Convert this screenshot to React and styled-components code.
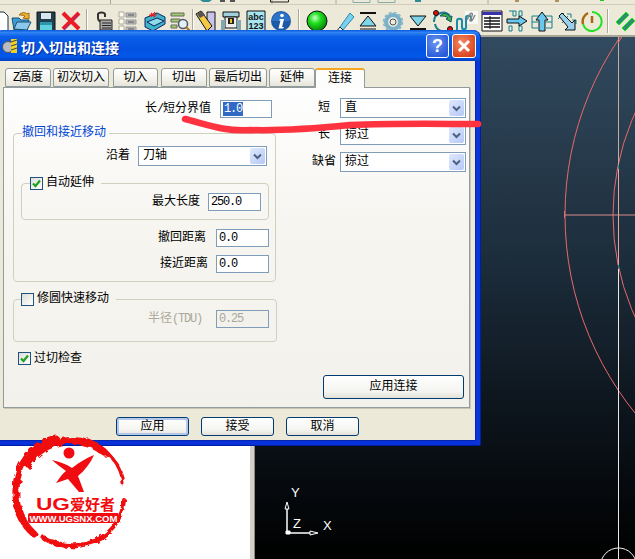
import React from "react";
import styled, { createGlobalStyle } from "styled-components";

const Global = createGlobalStyle`
  html, body { margin: 0; padding: 0; background: #fff; overflow: hidden; }
  * { box-sizing: border-box; }
  body { font-family: "Liberation Mono", "Noto Sans CJK SC", monospace; font-size: 12px; color: #000; }
`;

const Screen = styled.div`
  position: relative;
  width: 635px;
  height: 559px;
  overflow: hidden;
  display: flex;
  flex-direction: column;
`;

/* ---------- main toolbar ---------- */
const TopBar = styled.div`
  height: 37px;
  flex: none;
  background: #ece9d8;
  border-bottom: 2px solid #a9a594;
`;
const ClippedRow = styled.svg`
  display: block;
  width: 635px;
  height: 6px;
`;
const ToolRow = styled.div`
  display: flex;
  height: 29px;
  padding-top: 4px;
  margin-left: -12px;
`;
const Tool = styled.div`
  flex: none;
  width: ${(p) => p.$w}px;
  display: flex;
  justify-content: center;
  align-items: flex-start;
`;
const ToolSep = styled.div`
  flex: none;
  width: ${(p) => p.$w}px;
  display: flex;
  justify-content: center;
  &::after {
    content: "";
    width: 2px;
    height: 24px;
    margin-top: -1px;
    background: linear-gradient(90deg, #aca899 50%, #fff 50%);
  }
`;

const Ico = ({ children, size = 22 }) => (
  <svg width={size} height={size} viewBox="0 0 22 22" fill="none">
    {children}
  </svg>
);

const tools = [
  [23, <Ico><path d="M6 2h9l4 4v15H6z" fill="#fff" stroke="#17304a" /></Ico>],
  [22, <Ico><path d="M1 8h7l2 2h8l-2 10H3z" fill="#3f9ad8" stroke="#17506f" /><path d="M3 19l3-7h14l-4 8z" fill="#8cc8ee" stroke="#17506f" /><path d="M8 5c3-3 6-3 8-1l2-1v6l-6-1 2-2c-2-1-4-1-6-1z" fill="#f0b030" stroke="#a06a10" /></Ico>],
  [25, <Ico><path d="M2 2h18v19H2z" fill="#21404f" stroke="#111" /><path d="M6 3h10v6H6z" fill="#d8e6ee" /><path d="M5 12h12v9H5z" fill="#5fd0e0" /><path d="M5 12h12v3H5z" fill="#2e96ac" /></Ico>],
  [25, <Ico><path d="M3 3l16 16M19 3L3 19" stroke="#ea1c24" strokeWidth="4" /><path d="M10 14l-6 6M18 5l-5 5" stroke="#7a2fae" strokeWidth="1" /></Ico>],
  [8, null],
  [25, <Ico><path d="M12 7V4c-1-2-6-2-7 0v4c0 3 3 4 6 4" stroke="#333" strokeWidth="2" /><path d="M7 10h12v10H7z" fill="#aaa" stroke="#222" /><path d="M9 13h9M9 15.500h9M9 18h9" stroke="#222" /></Ico>],
  [26, <Ico><path d="M1 2h5v5H1zM1 9h5v5H1zM1 16h5v5H1z" fill="#fffbe0" stroke="#aaa" /><path d="M8 3h10v4H8zM8 10h10v4H8zM8 17h10v4H8z" fill="#bbb" stroke="#999" /><path d="M10 5h6M10 12h6M10 19h6" stroke="#555" /></Ico>],
  [26, <Ico><path d="M1 8l12-5 8 4v7L9 21l-8-4z" fill="#3fb4c8" stroke="#126" /><path d="M3 12l10-4 7 3-10 5z" fill="#8edce8" stroke="#126" /><path d="M7 3l4 4M11 2L7 7M5 5h8" stroke="#f01818" strokeWidth="1.200" /></Ico>],
  [23, <Ico><path d="M2 3h13v3H2zM2 9h9v3H2zM2 15h6v3H2z" fill="#9fce6a" stroke="#666" /><circle cx="14" cy="14" r="4.500" fill="#dff2f8" stroke="#556" strokeWidth="1.500" /><path d="M17 17l4 4" stroke="#a8752a" strokeWidth="2" /></Ico>],
  [3, null],
  [24, <Ico><path d="M12 2h8v20h-8z" fill="#c8c4e8" stroke="#111" /><path d="M1 4l5-3 11 15-5 5z" fill="#f2c845" stroke="#111" /><path d="M2 4l5-3 3 4-5 3z" fill="#555" /></Ico>],
  [25, <Ico><path d="M3 2h16v5H3z" fill="#9fd2dc" stroke="#111" /><path d="M5 7h12v11H5z" fill="#eee" stroke="#111" /><path d="M8 8h6v6H8z" fill="#222" /><path d="M10 9h2v4h-2z" fill="#f0c020" /><path d="M1 10h4v10H1zM17 10h4v10h-4z" fill="#7fa8b0" /></Ico>],
  [25, <Ico><path d="M2 1h18v20H2z" fill="#a8e4f2" stroke="#111" /><text x="11" y="10" fontSize="9" fontWeight="700" fill="#111" textAnchor="middle" fontFamily="Liberation Sans">abc</text><text x="11" y="19" fontSize="9" fontWeight="700" fill="#111" textAnchor="middle" fontFamily="Liberation Sans">123</text></Ico>],
  [26, <Ico><circle cx="11" cy="11" r="10" fill="#1c5aa8" /><path d="M2 11a9 9 0 0 1 18 0z" fill="#2c73c8" /><circle cx="12" cy="5.500" r="1.800" fill="#fff" /><path d="M10 9h4l-2 8h2l-1 1.500H8.500l2-8H9z" fill="#fff" /></Ico>],
  [10, null],
  [26, <Ico><defs><radialGradient id="ball" cx="0.4" cy="0.35" r="0.7"><stop offset="0" stopColor="#c8ffc8" /><stop offset="0.4" stopColor="#1ee01e" /><stop offset="1" stopColor="#057a05" /></radialGradient></defs><circle cx="11" cy="11" r="10" fill="url(#ball)" stroke="#111" /></Ico>],
  [25, <Ico><path d="M8 17L18 3l4 4-11 13z" fill="#7cd0f0" stroke="#2b89b0" /><path d="M8 17l3 3-7 2z" fill="#fff" stroke="#222" /></Ico>],
  [25, <Ico><path d="M3 3h16" stroke="#111" strokeWidth="2" /><path d="M11 6l8 10H3z" fill="#7ed4e8" stroke="#111" /><path d="M3 19h16" stroke="#111" strokeWidth="1" /></Ico>],
  [25, <Ico><circle cx="11" cy="12" r="7" stroke="#7ab0c8" strokeWidth="4" /><circle cx="11" cy="12" r="9.500" stroke="#8ab8c8" strokeWidth="1.500" strokeDasharray="3 2" /><circle cx="11" cy="12" r="3" fill="#ece9d8" stroke="#456" /></Ico>],
  [25, <Ico><path d="M3 6l8 10 8-10z" fill="#7ed4e8" stroke="#111" /><path d="M3 19h16" stroke="#111" strokeWidth="2" /></Ico>],
  [25, <Ico><path d="M2 12a9 9 0 0 1 16-6" stroke="#207c8c" strokeWidth="2" /><path d="M3 14a9 9 0 0 0 15 5" stroke="#207c8c" strokeWidth="2" /><path d="M8 6c3-4 8-3 10 1l2-1-1 6-5-3 2-1c-2-2-5-2-8-2z" fill="#3cb44a" stroke="#156" /><circle cx="4" cy="3" r="2.500" fill="#e01010" stroke="#111" /><circle cx="18" cy="19" r="2.500" fill="#e01010" stroke="#111" /></Ico>],
  [24, <Ico><path d="M9 1h13v13H9z" fill="#f8f8f6" /><path d="M1 21V11c0-3 5-3 5 0v6c0 3 4 3 4 0V8c0-3 5-3 5 0v3" stroke="#1a8ca8" strokeWidth="2" /><path d="M11 10l3-6c2-2 3 0 2 2l-2 4c0 2 2 1 3-1l2-4" stroke="#888" strokeWidth="1.500" /></Ico>],
  [25, <Ico><path d="M1 1h20v20H1z" fill="#fff" stroke="#111" /><path d="M1 2h20v3H1z" fill="#3a32a8" /><path d="M3 8h16M3 11h16M3 14h16M3 17h16" stroke="#111" strokeWidth="1.500" /><path d="M9 6v13" stroke="#111" /></Ico>],
  [25, <Ico><path d="M7 1h3v5H7zM13 1h3v5h-3zM3 1h4M3 16h3v5H3zM13 16h3v5h-3z" stroke="#12808c" /><path d="M1 9h12V6l8 5-8 5v-3H1z" fill="#68c8f0" stroke="#111" /></Ico>],
  [25, <Ico><path d="M1 6h7M14 6h7M1 12h6M15 12h6M1 18h6M15 18h6M1 6v12M21 6v12" stroke="#12808c" /><path d="M8 21V10H5l6-8 6 8h-3v11z" fill="#68c8f0" stroke="#111" /></Ico>],
  [25, <Ico><path d="M2 9l6-6M6 13l6-7M11 4l4 0v4" stroke="#12808c" /><path d="M16 10l4 0v4" stroke="#12808c" /><path d="M3 6l3-3 10 10 3-3v10H9l3-3z" fill="#9ad0ec" stroke="#111" /></Ico>],
  [25, <Ico><path d="M11 2a9.500 9.500 0 1 1-9 12" stroke="#22e022" strokeWidth="2" /><path d="M2 14A9.500 9.500 0 0 1 7 3" stroke="#a86a10" strokeWidth="2.500" /><path d="M11 6v7" stroke="#a86a10" strokeWidth="2.500" /></Ico>],
  [8, null],
  [25, <Ico><path d="M2 12L12 2l3 3L5 15zM8 18L18 8l3 3-10 10z" fill="#2d8f70" stroke="#18e818" /></Ico>],
];

/* ---------- work area below the toolbar ---------- */
const Work = styled.div`
  flex: 1;
  display: flex;
  min-height: 0;
`;
const SidePane = styled.div`
  width: 250px;
  flex: none;
  background: #fff;
`;
const Splitter = styled.div`
  width: 5px;
  flex: none;
  background: #d4d0c8;
  border-right: 1px solid #8c8a80;
`;
const Viewport = styled.div`
  flex: 1;
  background: linear-gradient(180deg, #324a5f 0%, #1b2b39 45%, #0b1219 75%, #000 100%);
`;
const ViewSvg = styled.svg`
  display: block;
  width: 380px;
  height: 522px;
`;

/* ---------- dialog ---------- */
const Dialog = styled.div`
  position: absolute;
  left: -4px;
  top: 30px;
  width: 484px;
  height: 415px;
  display: flex;
  flex-direction: column;
  background: #ece9d8;
  border: 4px solid #0831d9;
  border-top: 0;
  border-right-color: #0a35d8;
  border-radius: 8px 8px 0 0;
  box-shadow: inset -1px -1px 0 #0626b0, 1px 0 0 #001ea0, 0 1px 0 #001ea0;
`;
const TitleBar = styled.div`
  height: 31px;
  flex: none;
  margin: 0 -4px;
  padding: 4px 4px 0 6px;
  display: flex;
  align-items: flex-start;
  border-radius: 8px 8px 0 0;
  background: linear-gradient(180deg, #0a58e0 0%, #2f83f2 8%, #0a5ee8 22%, #0352e2 60%, #0358ea 85%, #0340c4 100%);
`;
const TitleIcon = styled.svg`
  margin: 4px 3px 0 0;
  flex: none;
`;
const TitleText = styled.div`
  flex: 1;
  margin-top: 4px;
  font-family: "Noto Sans CJK SC", sans-serif;
  font-size: 14px;
  font-weight: 700;
  line-height: 18px;
  color: #fff;
  text-shadow: 1px 1px 0 #0a2a90;
`;
const CapButton = styled.div`
  width: ${(p) => (p.$close ? 24 : 23)}px;
  height: 24px;
  flex: none;
  margin-left: ${(p) => p.$ml || 0}px;
  border: 1px solid #fff;
  border-radius: 3px;
  display: flex;
  align-items: center;
  justify-content: center;
  color: #fff;
  font-family: "Liberation Sans", sans-serif;
  font-weight: 700;
  font-size: 18px;
  background: ${(p) =>
    p.$close
      ? "radial-gradient(circle at 40% 35%, #f08a68, #dd4a22 70%, #c43a18)"
      : "radial-gradient(circle at 40% 35%, #6a95f0, #2f60dc 70%, #2350c8)"};
`;

const Tabs = styled.div`
  display: flex;
  flex: none;
  height: 20px;
  margin-top: 6px;
  padding-left: 5px;
  align-items: flex-end;
  position: relative;
  z-index: 1;
`;
const Tab = styled.div`
  width: ${(p) => p.$w}px;
  height: ${(p) => (p.$active ? 20 : 19)}px;
  margin-left: ${(p) => p.$ml ?? 2}px;
  margin-bottom: ${(p) => (p.$active ? -1 : 0)}px;
  display: flex;
  align-items: center;
  justify-content: center;
  line-height: 16px;
  border: 1px solid #919b9c;
  border-bottom: ${(p) => (p.$active ? 0 : "1px solid #919b9c")};
  border-radius: 3px 3px 0 0;
  background: ${(p) => (p.$active ? "#fdfdfc" : "linear-gradient(180deg, #fff, #f3f2ec 60%, #e6e4da)")};
  border-top: ${(p) => (p.$active ? "2px solid #f5a623" : "1px solid #919b9c")};
`;
const Panel = styled.div`
  height: 321px;
  flex: none;
  margin-left: 3px;
  width: 467px;
  padding: 12px 3px 8px 9px;
  display: grid;
  grid-template-columns: 264px 156px;
  column-gap: 33px;
  border: 1px solid #919b9c;
  box-shadow: 1px 1px 0 #c9c6b6;
  background: linear-gradient(180deg, #fefefe 0%, #f6f5f0 45%, #f2f1eb 100%);
`;
const LeftCol = styled.div`
  display: flex;
  flex-direction: column;
`;
const RightCol = styled.div`
  display: flex;
  flex-direction: column;
  gap: 7px;
  margin-top: -2px;
`;
const Row = styled.div`
  display: flex;
  justify-content: flex-end;
  align-items: center;
  gap: ${(p) => p.$gap ?? 8}px;
  height: ${(p) => p.$h ?? 18}px;
  margin-top: ${(p) => p.$mt ?? 0}px;
  padding-right: ${(p) => p.$pr ?? 0}px;
`;
const Label = styled.span`
  line-height: 16px;
  white-space: nowrap;
  color: ${(p) => (p.$off ? "#aca899" : "#000")};
`;
const Latin = styled.span`
  letter-spacing: -1.2px;
`;
const ValueBox = styled.div`
  width: ${(p) => p.$w ?? 53}px;
  height: 18px;
  flex: none;
  padding-left: 2px;
  display: flex;
  align-items: center;
  border: 1px solid #7f9db9;
  background: ${(p) => (p.$off ? "#f2f1ec" : "#fff")};
  color: ${(p) => (p.$off ? "#aca899" : "#000")};
  letter-spacing: -1.2px;
`;
const Picked = styled.span`
  background: #316ac5;
  color: #fff;
  padding: 0 1px;
  line-height: 14px;
`;
const Combo = styled.div`
  width: ${(p) => p.$w}px;
  height: 20px;
  flex: none;
  margin-right: ${(p) => p.$mr ?? 0}px;
  padding: 1px 1px 1px 4px;
  display: flex;
  align-items: center;
  justify-content: space-between;
  border: 1px solid #7f9db9;
  background: #fff;
`;
const ComboArrow = styled.div`
  width: 15px;
  height: 16px;
  display: flex;
  align-items: center;
  justify-content: center;
  border-radius: 2px;
  background: linear-gradient(135deg, #dfe8fd, #b6c8f6);
`;
const ComboLine = styled.div`
  display: flex;
  align-items: center;
  gap: 2px;
  height: 20px;
`;
const ComboLabel = styled.span`
  width: 28px;
  flex: none;
  text-align: center;
  line-height: 16px;
`;
const Group = styled.fieldset`
  margin: ${(p) => p.$mt ?? 0}px ${(p) => p.$mr ?? 0}px 0 0;
  padding: ${(p) => p.$pad};
  min-width: 0;
  border: 1px solid #d0d0bf;
  border-radius: 4px;
`;
const Legend = styled.legend`
  padding: 0 ${(p) => p.$pr ?? 3}px 0 0;
  margin-left: ${(p) => p.$ml ?? 0}px;
  height: 14px;
  display: flex;
  align-items: center;
  gap: 3px;
  line-height: 14px;
  color: ${(p) => p.$color ?? "#000"};
`;
const Box = styled.span`
  width: 13px;
  height: 13px;
  flex: none;
  display: inline-flex;
  align-items: center;
  justify-content: center;
  border: 1px solid #1c5180;
  background: linear-gradient(135deg, #dcdcd7, #fff);
`;
const CheckLine = styled.div`
  display: flex;
  align-items: center;
  gap: 3px;
  height: 13px;
  margin: 10px 0 0 5px;
  line-height: 14px;
`;
const Button = styled.div`
  width: ${(p) => p.$w ?? 73}px;
  height: ${(p) => p.$h ?? 19}px;
  display: flex;
  align-items: center;
  justify-content: center;
  border: 1px solid #003c74;
  border-radius: 3px;
  line-height: 14px;
  background: linear-gradient(180deg, #fff, #f4f4f0 70%, #e3e0d6);
  box-shadow: ${(p) => (p.$focus ? "inset 0 0 0 2px #b4c8ee" : "none")};
`;
const ConnectButton = styled(Button)`
  margin-top: auto;
  align-self: flex-end;
  margin-right: 2px;
`;
const Footer = styled.div`
  display: flex;
  gap: 12px;
  padding: 9px 0 0 116px;
`;

/* ---------- things lying on top ---------- */
const Stroke = styled.svg`
  position: absolute;
  left: 180px;
  top: 112px;
`;
const Logo = styled.svg`
  position: absolute;
  left: 8px;
  top: 430px;
`;

const Chevron = () => (
  <svg width="9" height="7" viewBox="0 0 9 7" fill="none">
    <path d="M1 1.500l3.500 3.500L8 1.500" stroke="#4d6185" strokeWidth="2" />
  </svg>
);
const Tick = () => (
  <svg width="9" height="9" viewBox="0 0 9 9" fill="none">
    <path d="M1 4.500l2.500 2.500L8 1.500" stroke="#21a121" strokeWidth="2.200" />
  </svg>
);
const Select = ({ w, mr, children }) => (
  <Combo $w={w} $mr={mr}>
    <Label>{children}</Label>
    <ComboArrow>
      <Chevron />
    </ComboArrow>
  </Combo>
);

function CadView() {
  return (
    <ViewSvg viewBox="255 37 380 522" fill="none">
      <circle cx="880" cy="215" r="315" stroke="#e8696b" />
      <circle cx="860" cy="215" r="247" stroke="#e8696b" />
      <path d="M564 215H635" stroke="#d98a88" />
      <path d="M564.500 211v7" stroke="#e8696b" />
      <path d="M618.500 37V165" stroke="#c4aaa4" />
      <path d="M618.500 165v4M618.500 265v4" stroke="#1e8f95" />
      <path d="M618.500 169V265" stroke="#e0a8a4" />
      <path d="M618.500 269V559" stroke="#eee6e0" />
      <path d="M618 43l4-6" stroke="#e8696b" />
      <circle cx="618.500" cy="566" r="18" stroke="#f0f0f0" />
      <g stroke="#fff">
        <path d="M287 533V506" strokeWidth="1.500" />
        <path d="M287 533H310" strokeWidth="1.500" />
        <path d="M287 502l-2 7h4z" fill="#111" />
        <path d="M318 533l-8-2v4z" fill="#111" />
        <path d="M286 531h4v3h-4z" fill="#fff" />
      </g>
      <g fill="#fff" fontFamily="Liberation Sans" fontSize="13">
        <text x="291" y="497">Y</text>
        <text x="293" y="528">Z</text>
        <text x="323" y="530">X</text>
      </g>
    </ViewSvg>
  );
}

function LogoMark() {
  return (
    <Logo width="124" height="124" viewBox="0 0 124 124" fill="none">
      <defs>
        <filter id="rough" x="-10%" y="-10%" width="120%" height="120%">
          <feTurbulence type="fractalNoise" baseFrequency="0.16" numOctaves="2" seed="4" />
          <feDisplacementMap in="SourceGraphic" scale="6" />
        </filter>
      </defs>
      <g filter="url(#rough)" stroke="#f00c10" strokeLinecap="round">
        <path d="M26 104A54 54 0 0 1 8 60C8 34 24 16 48 9" strokeWidth="7" />
        <path d="M20 34C36 10 70 2 96 22" strokeWidth="7" />
        <path d="M80 10C100 18 114 36 115 54" strokeWidth="3" />
        <path d="M116 70C114 92 100 106 84 112" strokeWidth="4" />
        <path d="M36 108C56 120 84 118 102 102" strokeWidth="5" />
        <path d="M30 22C48 4 82 6 100 26" strokeWidth="2" />
      </g>
      <circle cx="61" cy="23" r="5.500" fill="#f00c10" />
      <path d="M44 30C52 32 58 34 64 38C72 32 78 28 86 25C82 34 76 41 70 46L76 62H71L60 49L48 53C52 47 55 43 58 41C53 37 48 34 44 30Z" fill="#f00c10" />
      <rect x="20" y="83" width="91" height="10" rx="2" fill="#f00c10" />
      <text x="28" y="80" fontFamily="Liberation Sans" fontSize="16" fontWeight="700" fill="#f00c10" textLength="34" lengthAdjust="spacingAndGlyphs">UG</text>
      <text x="62" y="80" fontFamily="Noto Sans CJK SC" fontSize="15" fontWeight="700" fill="#f00c10">爱好者</text>
      <text x="65.500" y="91.500" textAnchor="middle" fontFamily="Liberation Sans" fontSize="9" fontWeight="700" fill="#fff" textLength="88" lengthAdjust="spacingAndGlyphs">WWW.UGSNX.COM</text>
    </Logo>
  );
}

export default function App() {
  return (
    <Screen>
      <Global />
      <TopBar>
        <ClippedRow viewBox="0 0 635 6" fill="none">
          <path d="M0 4.500H635" stroke="#d0ccba" />
          <path d="M110.500 0v4M272 0v4M336 0v4M488 0v4" stroke="#aca899" />
          <path d="M200 0h12l-3 2h-6z" fill="#2f8a9a" />
          <path d="M220 0h5v2h-5zM230 0h5v2h-5z" fill="#555" />
          <path d="M270.500 0v2h18V0" stroke="#222" />
          <path d="M353 0v2.500h17V0M378 0v2.500h17V0" stroke="#8aa" />
          <path d="M415 0h6v2h-6z" fill="#2f8a9a" />
          <path d="M515 0h4v2h-4zM555 0h4v2h-4z" fill="#b09060" />
          <path d="M600 0h4v1h-4z" fill="#18c818" />
        </ClippedRow>
        <ToolRow>
          {tools.map(([w, icon], i) =>
            icon ? <Tool key={i} $w={w}>{icon}</Tool> : <ToolSep key={i} $w={w} />
          )}
        </ToolRow>
      </TopBar>

      <Work>
        <SidePane />
        <Splitter />
        <Viewport>
          <CadView />
        </Viewport>
      </Work>

      <Dialog>
        <TitleBar>
          <TitleIcon width="16" height="16" viewBox="0 0 16 16" fill="none">
            <circle cx="6" cy="9" r="5.500" fill="#b8bcc4" stroke="#555" />
            <path d="M9 1h6v14H9z" fill="#f0d020" />
            <path d="M9 4l6-2M9 8l6-2M9 12l6-2" stroke="#444" />
          </TitleIcon>
          <TitleText>切入切出和连接</TitleText>
          <CapButton>?</CapButton>
          <CapButton $close $ml={3}>
            <svg width="14" height="14" viewBox="0 0 14 14" fill="none">
              <path d="M2 2l10 10M12 2L2 12" stroke="#fff" strokeWidth="3" />
            </svg>
          </CapButton>
        </TitleBar>

        <Tabs>
          <Tab $w={46} $ml={0}><Latin>Z</Latin>高度</Tab>
          <Tab $w={56}>初次切入</Tab>
          <Tab $w={45} $ml={4}>切入</Tab>
          <Tab $w={46} $ml={3}>切出</Tab>
          <Tab $w={58}>最后切出</Tab>
          <Tab $w={46}>延伸</Tab>
          <Tab $w={50} $ml={0} $active>连接</Tab>
        </Tabs>

        <Panel>
          <LeftCol>
            <Row $gap={9} $pr={5}>
              <Label>长<Latin>/</Latin>短分界值</Label>
              <ValueBox $w={52}><Picked>1.0</Picked></ValueBox>
            </Row>

            <Group $mt={8} $mr={1} $pad="6px 6px 8px 7px">
              <Legend $ml={1} $color="#0046d5">撤回和接近移动</Legend>
              <Row $h={20}>
                <Label>沿着</Label>
                <Select w={129} mr={2}>刀轴</Select>
              </Row>
              <Group $mt={10} $pad="3px 7px 8px 8px">
                <Legend $pr={7}>
                  <Box><Tick /></Box>
                  自动延伸
                </Legend>
                <Row>
                  <Label>最大长度</Label>
                  <ValueBox>250.0</ValueBox>
                </Row>
              </Group>
              <Row $mt={9} $gap={10}>
                <Label>撤回距离</Label>
                <ValueBox>0.0</ValueBox>
              </Row>
              <Row $mt={8}>
                <Label>接近距离</Label>
                <ValueBox>0.0</ValueBox>
              </Row>
            </Group>

            <Group $mt={10} $pad="4px 7px 13px 7px">
              <Legend $pr={7}>
                <Box />
                修圆快速移动
              </Legend>
              <Row $gap={14}>
                <Label $off>半径<Latin>(TDU)</Latin></Label>
                <ValueBox $off>0.25</ValueBox>
              </Row>
            </Group>

            <CheckLine>
              <Box><Tick /></Box>
              过切检查
            </CheckLine>
          </LeftCol>

          <RightCol>
            <ComboLine>
              <ComboLabel>短</ComboLabel>
              <Select w={126}>直</Select>
            </ComboLine>
            <ComboLine>
              <ComboLabel>长</ComboLabel>
              <Select w={126}>掠过</Select>
            </ComboLine>
            <ComboLine>
              <ComboLabel>缺省</ComboLabel>
              <Select w={126}>掠过</Select>
            </ComboLine>
            <ConnectButton $w={141} $h={24}>应用连接</ConnectButton>
          </RightCol>
        </Panel>

        <Footer>
          <Button $focus>应用</Button>
          <Button>接受</Button>
          <Button>取消</Button>
        </Footer>
      </Dialog>

      <Stroke width="305" height="26" viewBox="0 0 305 26" fill="none">
        <path d="M5 7C25 12 45 20 70 18C105 19 140 16 170 13C220 11 260 12 298 12" stroke="#ff3340" strokeWidth="6.500" strokeLinecap="round" />
      </Stroke>
      <LogoMark />
    </Screen>
  );
}
